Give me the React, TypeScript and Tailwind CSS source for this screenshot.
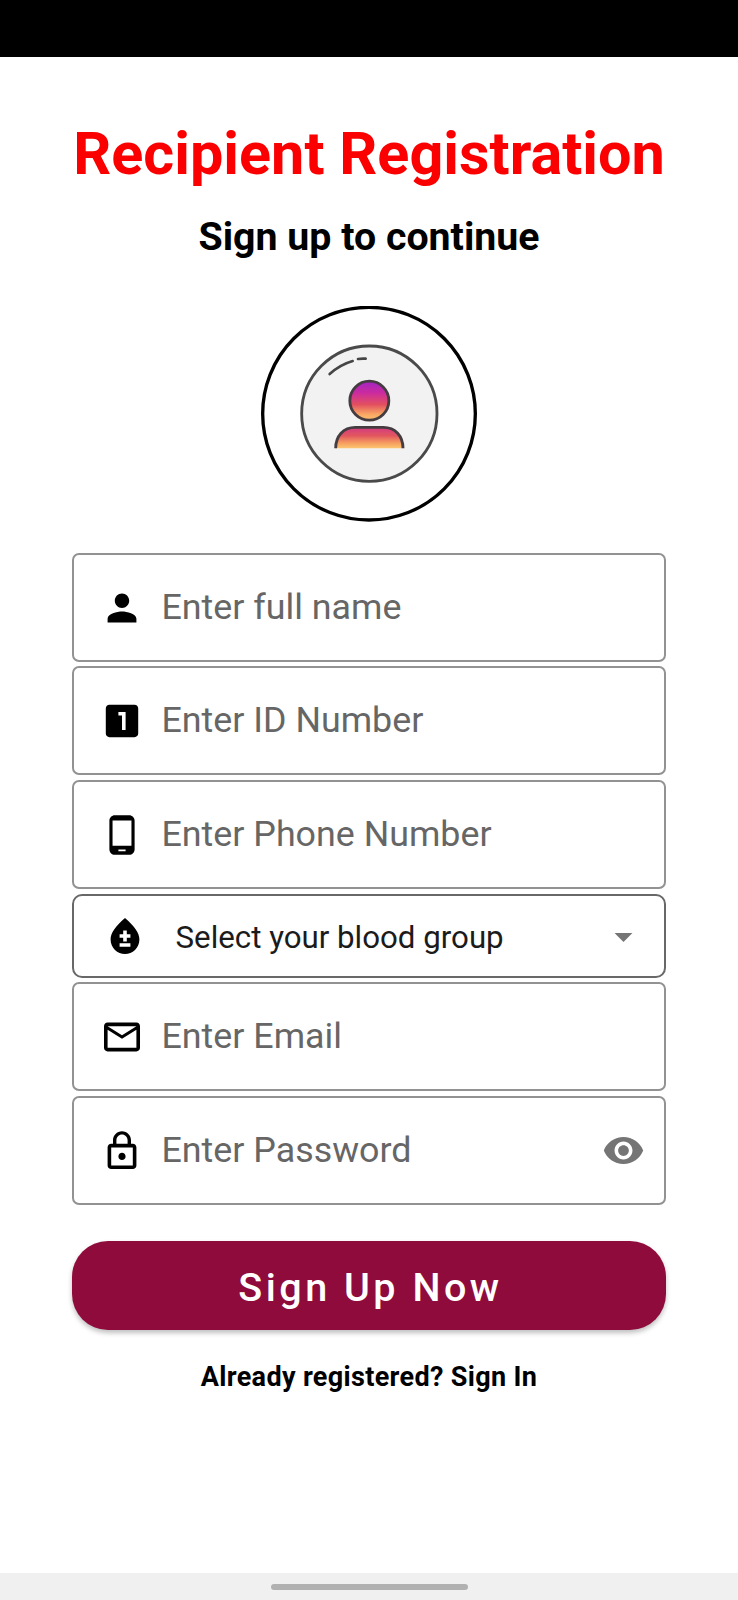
import { useState } from "react";
import type { ReactNode } from "react";
import {
  MdArrowDropDown,
  MdBloodtype,
  MdLockOutline,
  MdLooksOne,
  MdMailOutline,
  MdPerson,
  MdPhoneAndroid,
  MdVisibility,
} from "react-icons/md";

function Avatar() {
  return (
    <svg viewBox="33 32 648 648" className="h-[216px] w-[216px]" fill="none">
      <defs>
        <linearGradient id="head" x1="0" y1="0" x2="0" y2="1">
          <stop offset="0" stopColor="#a224c4" />
          <stop offset="0.3" stopColor="#cb2b9e" />
          <stop offset="0.6" stopColor="#e2505f" />
          <stop offset="0.85" stopColor="#f8a863" />
          <stop offset="1" stopColor="#fdc070" />
        </linearGradient>
        <linearGradient id="body" x1="0" y1="0" x2="0" y2="1">
          <stop offset="0" stopColor="#d23a80" />
          <stop offset="0.4" stopColor="#e2565f" />
          <stop offset="0.75" stopColor="#f59f60" />
          <stop offset="1" stopColor="#fdc672" />
        </linearGradient>
      </defs>
      <circle cx="357" cy="355" r="319" stroke="#000" strokeWidth="10" />
      <circle cx="358" cy="355" r="203" fill="#f2f2f2" stroke="#4a4a4a" strokeWidth="8.5" />
      <path
        d="M239 236Q270 208 308 197M324 191Q336 189 347 190"
        stroke="#454545"
        strokeWidth="8"
        strokeLinecap="round"
      />
      <circle cx="358" cy="316" r="58.5" fill="url(#head)" stroke="#453c42" strokeWidth="8.5" />
      <path d="M257 459C257 422 280 396 316 396H400C436 396 459 422 459 459Z" fill="url(#body)" />
      <path d="M257 459C257 422 280 396 316 396H400C436 396 459 422 459 459" stroke="#453c42" strokeWidth="8.5" />
    </svg>
  );
}

interface FieldProps {
  icon: ReactNode;
  placeholder: string;
  type?: string;
  trailing?: ReactNode;
}

function Field({ icon, placeholder, type = "text", trailing }: FieldProps) {
  return (
    <label className="flex h-[109px] shrink-0 items-center rounded-[7px] border-2 border-[#929292] pr-[19px] pl-[26px]">
      {icon}
      <input
        type={type}
        placeholder={placeholder}
        className="mb-[2px] ml-[17.5px] h-[60px] min-w-0 flex-1 bg-transparent text-[35.8px] text-black outline-none placeholder:text-[#666666]"
      />
      {trailing}
    </label>
  );
}

const iconClass = "h-[44px] w-[44px] shrink-0 p-[0.4px] text-black";

export default function App() {
  const [visible, setVisible] = useState(false);
  return (
    <div className="flex h-[1600px] w-[738px] flex-col bg-white font-[Roboto,sans-serif] text-black">
      <div className="h-[57px] shrink-0 bg-black" />
      <main className="flex flex-1 flex-col px-[72px]">
        <h1 className="mt-[62px] text-center text-[59.4px] leading-[70px] font-bold whitespace-nowrap text-[#fb0000]">
          Recipient Registration
        </h1>
        <p className="mt-[24px] text-center text-[39.3px] leading-[49px] font-bold">Sign up to continue</p>
        <div className="mt-[44px] flex justify-center">
          <Avatar />
        </div>
        <form className="mt-[31px] flex flex-col" onSubmit={(e) => e.preventDefault()}>
          <div className="flex flex-col gap-[5px]">
            <div className="flex flex-col gap-1">
              <Field icon={<MdPerson className={iconClass} />} placeholder="Enter full name" />
              <Field icon={<MdLooksOne className={iconClass} />} placeholder="Enter ID Number" />
            </div>
            <Field icon={<MdPhoneAndroid className={iconClass} />} placeholder="Enter Phone Number" type="tel" />
            <div className="flex flex-col gap-1">
              <button
                type="button"
                className="flex h-[84px] shrink-0 items-center rounded-[10px] border-2 border-[#686868] pr-[19px] pl-[29px]"
              >
                <MdBloodtype className={iconClass} />
                <span className="ml-[28.5px] flex-1 pt-[3px] text-left text-[31.25px] leading-[40px] text-[#1b1b1b]">
                  Select your blood group
                </span>
                <MdArrowDropDown className="h-[43px] w-[43px] text-[#757575]" />
              </button>
              <Field icon={<MdMailOutline className={iconClass} />} placeholder="Enter Email" />
            </div>
            <Field
              icon={<MdLockOutline className={iconClass} />}
              placeholder="Enter Password"
              type={visible ? "text" : "password"}
              trailing={
                <button type="button" aria-label="Toggle password" onClick={() => setVisible(!visible)}>
                  <MdVisibility className="h-[43px] w-[43px] text-[#757575]" />
                </button>
              }
            />
          </div>
          <button
            type="submit"
            className="mt-[36px] h-[89px] rounded-[36px] bg-[#8f0b3b] pt-[4px] pl-[3px] text-[39.5px] leading-[48px] font-medium tracking-[3.5px] text-white shadow-[0_3px_5px_rgba(0,0,0,0.25)]"
          >
            Sign Up Now
          </button>
        </form>
        <p className="mt-[30px] text-center text-[27px] leading-[34px] font-bold tracking-[0.33px]">
          Already registered? Sign In
        </p>
      </main>
      <div className="flex h-[27px] shrink-0 justify-center bg-[#f0f0f0] pt-[11px]">
        <div className="h-[6px] w-[197px] rounded-full bg-[#b1b1b1]" />
      </div>
    </div>
  );
}
